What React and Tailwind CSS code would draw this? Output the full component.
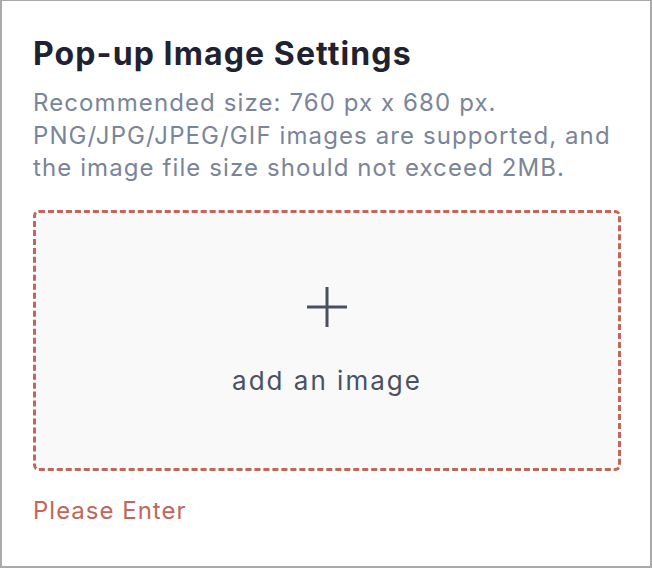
export default function App() {
  return (
    <div className="w-[652px] h-[568px] bg-white border-2 border-t border-[#aaaaaa] font-['Inter',sans-serif]">
      <div className="pl-[31px] pr-[29px] pt-[33px]">
        <h2 className="text-[32px] leading-[40px] font-bold tracking-[1.1px] text-[#1f2230]">Pop-up Image Settings</h2>
        <p className="mt-[13px] text-[24px] leading-[32.5px] tracking-[1.1px] text-[#7a8599]">
          Recommended size: 760 px x 680 px.
          <br />
          PNG/JPG/JPEG/GIF images are supported, and the image file size should not exceed 2MB.
        </p>
        <div className="mt-[25px] h-[261px] rounded-[6px] border-[3px] border-dashed border-[#c0665a] bg-[#f9f9f9] flex flex-col items-center justify-center">
          <svg width="42" height="42" viewBox="0 0 42 42" className="mt-[2px]">
            <path d="M21 1v40M1 21h40" stroke="#4a5060" strokeWidth="3" fill="none" />
          </svg>
          <span className="mt-[37px] text-[26px] leading-[32px] tracking-[2px] text-[#4a5163]">add an image</span>
        </div>
        <p className="mt-[24px] text-[24px] leading-[32px] tracking-[1px] text-[#c0665a]">Please Enter</p>
      </div>
    </div>
  )
}
